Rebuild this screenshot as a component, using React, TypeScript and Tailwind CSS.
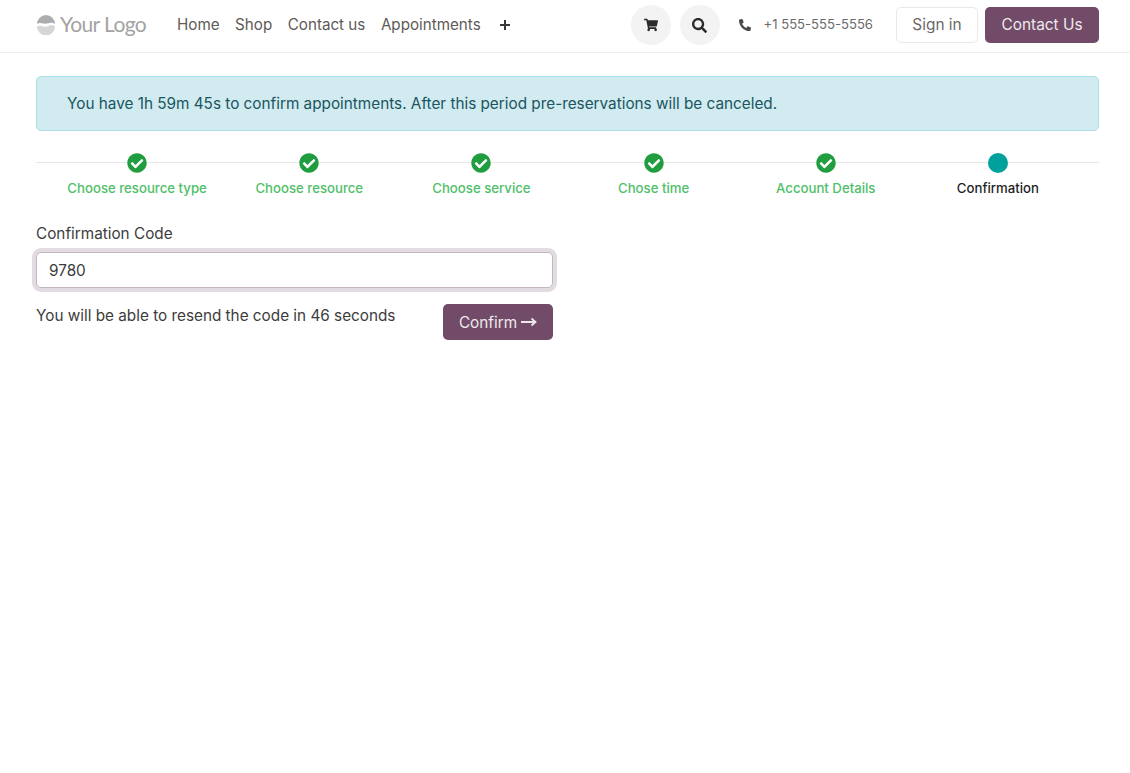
import { FaCheckCircle, FaPhone, FaSearch, FaShoppingCart } from 'react-icons/fa';

const steps = ['Choose resource type', 'Choose resource', 'Choose service', 'Chose time', 'Account Details'];
const navLinks = ['Home', 'Shop', 'Contact us', 'Appointments'];

function Logo() {
  return (
    <div className="flex items-center w-[110px]">
      <svg width="20" height="20" viewBox="0 0 20 20" className="shrink-0">
        <path d="M1 9 A9 9 0 0 1 19 9 C15 6 12 9.5 7.5 8.5 C5 8 3 7.5 1 9 Z" fill="#adadad" />
        <path d="M1 11.5 C4 9.5 8 12.5 11 11.5 C14 10.5 16 9.5 19 11.5 A9 9 0 0 1 1 11.5 Z" fill="#d6d6d6" />
      </svg>
      <span className="ml-[4px] mb-[3px] font-['Lato',sans-serif] text-[21px] leading-none font-normal text-[#a3a3a3] tracking-[-0.6px] whitespace-nowrap">
        Your Logo
      </span>
    </div>
  );
}

function Header() {
  return (
    <header className="h-[53px] border-b border-[#eeeeee] pl-[36px] pr-[31px] pb-[2px] flex items-center bg-white">
      <Logo />
      <nav className="flex items-center ml-[31px] gap-[15.5px] text-[15.2px] text-[#5e5a58]">
        {navLinks.map(link => (
          <a key={link}>{link}</a>
        ))}
        <svg width="12" height="12" viewBox="0 0 12 12" className="ml-[3px]">
          <path d="M6 1v10M1 6h10" stroke="#3a3a3a" strokeWidth="2" />
        </svg>
      </nav>
      <div className="ml-auto flex items-center">
        <button className="w-[40px] h-[40px] rounded-full bg-[#f3f3f3] flex items-center justify-center text-[#2b2b2b]">
          <FaShoppingCart size={14} />
        </button>
        <button className="w-[40px] h-[40px] ml-[9px] rounded-full bg-[#f3f3f3] flex items-center justify-center text-[#2b2b2b]">
          <FaSearch size={15} />
        </button>
        <FaPhone size={12} className="ml-[19px] text-[#4a4a4a] rotate-90" />
        <span className="ml-[13px] text-[13.1px] text-[#6b6b6b]">+1 555-555-5556</span>
        <button className="ml-[23px] w-[82px] h-[36px] rounded-[5px] border border-[#e9e9e9] bg-white text-[15.4px] text-[#6b6866]">
          Sign in
        </button>
        <button className="ml-[7px] w-[114px] h-[36px] rounded-[5px] bg-[#714b67] text-[15.4px] text-[#efe9ed]">
          Contact Us
        </button>
      </div>
    </header>
  );
}

function Steps() {
  return (
    <div className="relative mt-[22px] px-[15px] grid grid-cols-6">
      <div className="absolute left-0 right-0 top-[9px] h-px bg-[#e6e6e6]" />
      {steps.map(step => (
        <div key={step} className="relative flex flex-col items-center">
          <span className="w-[20px] h-[20px] rounded-full bg-white flex items-center justify-center">
            <FaCheckCircle size={20} className="text-[#1f9d3f]" />
          </span>
          <span className="mt-[5px] text-[13.2px] font-medium leading-[20px] text-[#4fc06a]">{step}</span>
        </div>
      ))}
      <div className="relative flex flex-col items-center">
        <span className="w-[20px] h-[20px] rounded-full bg-[#00a09d]" />
        <span className="mt-[5px] text-[13.2px] font-medium leading-[20px] text-[#1f1f1f]">Confirmation</span>
      </div>
    </div>
  );
}

export default function App() {
  return (
    <div className="min-h-[773px] bg-white font-['Inter',sans-serif]">
      <Header />
      <main className="pl-[36px] pr-[31px]">
        <div className="mt-[23px] h-[55px] flex items-center px-[30px] pt-[1px] rounded-[5px] border border-[#a9dfe6] bg-[#d1ebf0] text-[15.3px] text-[#1a5560]">
          You have 1h 59m 45s to confirm appointments. After this period pre-reservations will be canceled.
        </div>
        <Steps />
        <div className="mt-[25px] w-[517px]">
          <label className="block text-[15.3px] leading-[22px] text-[#3c3c3c]">Confirmation Code</label>
          <input
            readOnly
            value="9780"
            className="mt-[7px] block w-full h-[36px] px-[12px] rounded-[5px] border border-[#c4b6c1] bg-white text-[15.3px] text-[#3c3c3c] shadow-[0_0_0_4px_#e2dbe1] outline-none"
          />
          <div className="mt-[16px] flex items-start justify-between">
            <p className="pt-[1px] text-[15.3px] leading-[22px] text-[#3c3c3c]">You will be able to resend the code in 46 seconds</p>
            <button className="w-[110px] h-[36px] rounded-[5px] bg-[#714b67] text-[15.3px] text-[#efe9ed] flex items-center justify-center gap-[4px]">
              <span className="pt-[2px]">Confirm</span>
              <svg width="16" height="10" viewBox="0 0 16 10">
                <path d="M0 5h13M10.5 1.5 14.5 5l-4 3.5" fill="none" stroke="#efe9ed" strokeWidth="1.8" />
              </svg>
            </button>
          </div>
        </div>
      </main>
    </div>
  );
}
